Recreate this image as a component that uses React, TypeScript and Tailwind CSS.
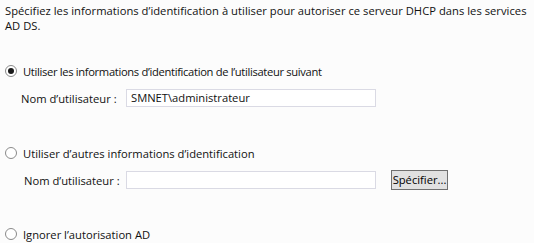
const FONT = "font-['Segoe_UI','Open_Sans','Noto_Sans',sans-serif]";

function Radio({ checked, label, track }: { checked?: boolean; label: string; track?: string }) {
  return (
    <label className="flex h-[20px] items-center whitespace-nowrap">
      <span className="ml-[5px] flex h-[12px] w-[12px] items-center justify-center rounded-full border border-[#8a8a8a] bg-white">
        {checked && <span className="h-[6px] w-[6px] rounded-full bg-[#1a1a1a]" />}
      </span>
      <span className={`ml-[6px] ${track ?? ""}`}>{label}</span>
    </label>
  );
}

function UserRow({ value, indent, withButton }: { value: string; indent: string; withButton?: boolean }) {
  return (
    <div className="flex h-[20px] items-center whitespace-nowrap">
      <span className={`${indent} flex-1`}>Nom d’utilisateur :</span>
      <div className="h-[18px] w-[250px] border border-[#dadae4] bg-white pl-[4px] leading-[16px]">
        {value}
      </div>
      {withButton ? (
        <button className="ml-[15px] mr-[86px] h-[20px] w-[57px] border border-[#707070] bg-[#e1e1e1] leading-[18px] text-black">
          Spécifier...
        </button>
      ) : (
        <div className="w-[158px]" />
      )}
    </div>
  );
}

export default function App() {
  return (
    <div className={`h-[243px] w-[534px] overflow-hidden bg-[#fcfcfc] text-[11.2px] leading-[15px] text-[#111] ${FONT}`}>
      <p className="whitespace-nowrap pl-[5px] pt-[3px] tracking-[0.03px]">
        Spécifiez les informations d’identification à utiliser pour autoriser ce serveur DHCP dans les services
        <br />
        AD DS.
      </p>
      <div className="mt-[28px]">
        <Radio checked track="tracking-[-0.33px]" label="Utiliser les informations d’identification de l’utilisateur suivant" />
      </div>
      <div className="mt-[7px]">
        <UserRow value="SMNET\administrateur" indent="pl-[21px]" />
      </div>
      <div className="mt-[35px]">
        <Radio label="Utiliser d’autres informations d’identification" />
      </div>
      <div className="mt-[7px]">
        <UserRow value="" indent="pl-[24px]" withButton />
      </div>
      <div className="mt-[34px]">
        <Radio label="Ignorer l’autorisation AD" />
      </div>
    </div>
  );
}
